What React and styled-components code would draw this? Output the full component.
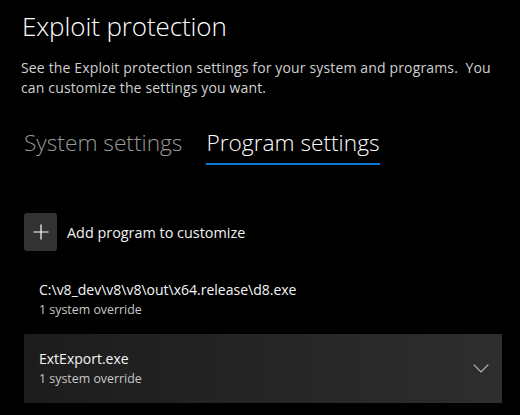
import React, { useState } from "react";
import styled, { createGlobalStyle } from "styled-components";

const GlobalStyle = createGlobalStyle`
  html, body {
    margin: 0;
    padding: 0;
    background: #000;
  }
  body {
    font-family: "Open Sans", "Noto Sans", sans-serif;
    color: #fff;
    overflow: hidden;
  }
`;

const programs = [
  { name: "C:\\v8_dev\\v8\\v8\\out\\x64.release\\d8.exe", overrides: "1 system override" },
  { name: "ExtExport.exe", overrides: "1 system override", hovered: true },
];

const App = () => {
  const [tab, setTab] = useState("program");

  return (
    <>
      <GlobalStyle />
      <Page>
        <Title>Exploit protection</Title>
        <Description>
          See the Exploit protection settings for your system and programs.&nbsp; You
          can customize the settings you want.
        </Description>
        <Tabs>
          <Tab active={tab === "system"} onClick={() => setTab("system")}>
            System settings
          </Tab>
          <Tab active={tab === "program"} onClick={() => setTab("program")}>
            Program settings
          </Tab>
        </Tabs>
        <AddRow>
          <AddButton>
            <svg width="16" height="16" viewBox="0 0 16 16">
              <path d="M8 0.5v15M0.5 8h15" stroke="#fff" strokeWidth="1.2" fill="none" />
            </svg>
          </AddButton>
          <AddLabel>Add program to customize</AddLabel>
        </AddRow>
        <ProgramList>
          {programs.map((p) => (
            <ProgramItem key={p.name} hovered={p.hovered}>
              <ProgramText>
                <ProgramName>{p.name}</ProgramName>
                <ProgramSub>{p.overrides}</ProgramSub>
              </ProgramText>
              {p.hovered && (
                <Chevron width="16" height="9" viewBox="0 0 16 9">
                  <path d="M0.7 0.7L8 8L15.3 0.7" stroke="#bdbdbd" strokeWidth="1.1" fill="none" />
                </Chevron>
              )}
            </ProgramItem>
          ))}
        </ProgramList>
      </Page>
    </>
  );
};

const Page = styled.div`
  padding: 8px 18px 0 22px;
  display: flex;
  flex-direction: column;
`;

const Title = styled.h1`
  margin: 0;
  font-weight: 300;
  font-size: 26px;
  line-height: 36px;
  color: #fff;
  letter-spacing: -0.1px;
`;

const Description = styled.p`
  margin: 14px 0 0 -1px;
  font-size: 14px;
  line-height: 20px;
  letter-spacing: 0.15px;
  color: #d0d0d0;
  max-width: 480px;
`;

const Tabs = styled.div`
  display: flex;
  gap: 24px;
  margin: 30px 0 0 2px;
`;

const Tab = styled.button`
  background: none;
  border: none;
  padding: 0 0 5px;
  font-family: inherit;
  font-size: 22.7px;
  font-weight: 300;
  line-height: 30px;
  color: ${(p) => (p.active ? "#fff" : "#9a9a9a")};
  border-bottom: 2px solid ${(p) => (p.active ? "#0a7ad8" : "transparent")};
  cursor: pointer;
`;

const AddRow = styled.div`
  display: flex;
  align-items: center;
  gap: 10px;
  margin: 48px 0 0 2px;
`;

const AddButton = styled.div`
  width: 33px;
  height: 38px;
  border-radius: 3px;
  background: #333333;
  display: flex;
  align-items: center;
  justify-content: center;
`;

const AddLabel = styled.span`
  font-size: 14.4px;
  color: #f2f2f2;
`;

const ProgramList = styled.div`
  display: flex;
  flex-direction: column;
  margin: 14px 0 0 2px;
`;

const ProgramItem = styled.div`
  height: 69px;
  width: 478px;
  box-sizing: border-box;
  padding: 0 13px 0 15px;
  display: flex;
  align-items: center;
  justify-content: space-between;
  background: ${(p) =>
    p.hovered ? "linear-gradient(90deg, #1c1c1c 0%, #262626 55%, #2e2e2e 100%)" : "transparent"};
`;

const ProgramText = styled.div`
  display: flex;
  flex-direction: column;
  margin-top: 1px;
`;

const ProgramName = styled.span`
  font-size: 14px;
  line-height: 20px;
  color: #f5f5f5;
`;

const ProgramSub = styled.span`
  font-size: 12.4px;
  line-height: 20px;
  color: #c8c8c8;
`;

const Chevron = styled.svg`
  display: block;
`;

export default App;
